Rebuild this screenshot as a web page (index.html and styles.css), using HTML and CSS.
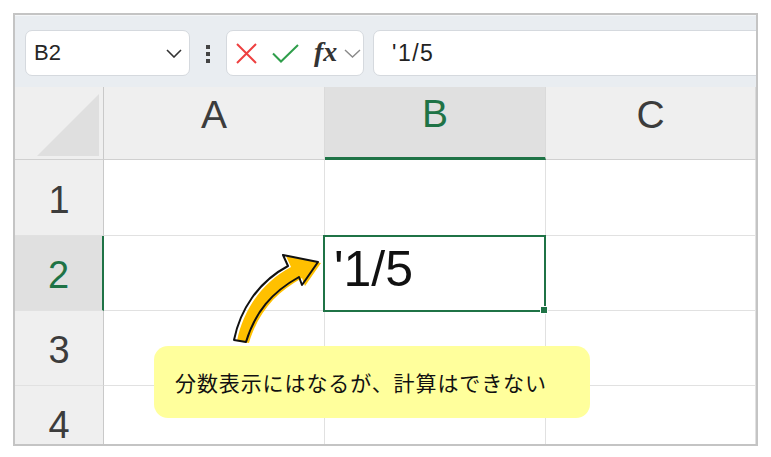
FILE: index.html
```html
<!DOCTYPE html>
<html lang="ja">
<head>
    <meta charset="UTF-8">
    <title>分数表示</title>
    <link rel="stylesheet" href="styles.css">
</head>
<body>
    <div class="frame">
        <div class="toolbar">
            <div class="name-box">
                <span>B2</span>
                <svg width="16" height="9" viewBox="0 0 16 9"><path d="M1 1 L8 8 L15 1" fill="none" stroke="#333" stroke-width="1.6"/></svg>
            </div>
            <div class="dots"><i></i><i></i><i></i></div>
            <div class="fx-box">
                <svg class="ico-x" width="21" height="21" viewBox="0 0 21 21"><path d="M1 1 L20 20 M20 1 L1 20" stroke="#ee4040" stroke-width="2" fill="none"/></svg>
                <svg class="ico-ok" width="27" height="19" viewBox="0 0 27 19"><path d="M1 9.5 L9 17.5 L26 1" stroke="#2f9e4b" stroke-width="2" fill="none"/></svg>
                <span class="fx">fx</span>
                <svg width="17" height="9" viewBox="0 0 17 9"><path d="M1 1 L8.5 8 L16 1" fill="none" stroke="#8a8a8a" stroke-width="1.4"/></svg>
            </div>
            <div class="formula">'1/5</div>
        </div>

        <div class="sheet">
            <div class="corner"><div class="tri"></div></div>
            <div class="col-head">A</div>
            <div class="col-head active">B</div>
            <div class="col-head">C</div>

            <div class="row-head">1</div>
            <div class="cell"></div>
            <div class="cell"></div>
            <div class="cell"></div>

            <div class="row-head active">2</div>
            <div class="cell"></div>
            <div class="cell selected">'1/5</div>
            <div class="cell"></div>

            <div class="row-head">3</div>
            <div class="cell"></div>
            <div class="cell"></div>
            <div class="cell"></div>

            <div class="row-head">4</div>
            <div class="cell"></div>
            <div class="cell"></div>
            <div class="cell"></div>
        </div>

        <!-- 吹き出しと矢印 -->
        <svg class="arrow" viewBox="15 15 741 429" width="741" height="429">
            <path transform="translate(3 1)" fill="#ffc000" d="M234 340 C240 310 258 282 288 266 L283 255 L318 262 L302 285 L299 277 C272 292 255 312 246 342 Z"/>
            <path fill="none" stroke="#111" stroke-width="2" stroke-linejoin="round" d="M234 340 C240 310 258 282 288 266 L283 255 L318 262 L302 285 L299 277 C272 292 255 312 246 342 Z"/>
        </svg>
        <div class="callout">分数表示にはなるが、計算はできない</div>
    </div>
</body>
</html>
```

FILE: styles.css
```css
* {
    margin: 0;
    padding: 0;
    box-sizing: border-box;
}
body {
    background: #fff;
    font-family: "Liberation Sans", Arial, sans-serif;
    color: #222;
}
.frame {
    position: relative;
    margin: 13px 0 0 13px;
    width: 745px;
    height: 433px;
    border: 2px solid #c4c4c4;
    overflow: hidden;
}
.toolbar {
    height: 72px;
    background: #e9edf1;
    border-top: 1px solid #f4f6f8;
    display: flex;
    align-items: flex-start;
    padding: 14px 0 0 10px;
    white-space: nowrap;
}
.toolbar > * {
    flex-shrink: 0;
}
.name-box,
.fx-box,
.formula {
    height: 46px;
    background: #fff;
    border: 1px solid #d5d9de;
    border-radius: 7px;
    display: flex;
    align-items: center;
}
.name-box {
    width: 165px;
    justify-content: space-between;
    padding: 0 7px 0 8px;
    font-size: 22px;
    color: #262626;
}
.dots {
    display: flex;
    flex-direction: column;
    gap: 3px;
    margin: 15px 16px 0 16px;
}
.dots i {
    display: block;
    width: 4px;
    height: 4px;
    background: #444;
}
.fx-box {
    width: 138px;
    padding-left: 9px;
}
.ico-ok {
    margin-left: 15px;
}
.fx {
    font-family: "Liberation Serif", "Times New Roman", serif;
    font-style: italic;
    font-weight: bold;
    font-size: 28px;
    color: #333;
    margin: -3px 7px 0 15px;
}
.formula {
    margin-left: 9px;
    width: 420px;
    padding-left: 18px;
    font-size: 23px;
    letter-spacing: 1.5px;
    color: #222;
}
.sheet {
    display: grid;
    grid-template-columns: 89px 221px 221px 1fr;
    grid-template-rows: 73px 76px 75px 75px 75px;
}
.sheet > div {
    border-right: 1px solid #e1e1e1;
    border-bottom: 1px solid #e1e1e1;
}
.corner {
    background: #efefef;
    display: flex;
    justify-content: flex-end;
    align-items: flex-end;
    padding: 0 4px 3px 0;
    border-right-color: #c9c9c9 !important;
    border-bottom-color: #d0d0d0 !important;
}
.tri {
    width: 62px;
    height: 62px;
    background: #dfdfdf;
    clip-path: polygon(100% 0, 100% 100%, 0 100%);
}
.col-head {
    background: #efefef;
    display: flex;
    justify-content: center;
    align-items: center;
    padding-bottom: 17px;
    font-size: 39px;
    color: #3c3c3c;
    border-right-color: #dadada !important;
    border-bottom-color: #d0d0d0 !important;
}
.col-head.active {
    background: #e0e0e0;
    color: #1f7346;
    border-bottom: 3px solid #1f7346 !important;
}
.row-head {
    background: #efefef;
    display: flex;
    justify-content: center;
    align-items: center;
    padding-top: 5px;
    font-size: 38px;
    color: #3c3c3c;
    border-right-color: #c9c9c9 !important;
}
.row-head.active {
    background: #e0e0e0;
    color: #1f7346;
    border-right: 2px solid #1f7346 !important;
}
.cell {
    background: #fff;
}
.selected {
    position: relative;
    font-size: 50px;
    color: #111;
    padding: 6px 0 0 9px;
    line-height: 1.1;
}
.selected::after {
    content: "";
    position: absolute;
    inset: -1px -1px -2px -2px;
    border: 2px solid #1f7346;
}
.selected::before {
    content: "";
    position: absolute;
    right: -3px;
    bottom: -4px;
    width: 6px;
    height: 6px;
    background: #1f7346;
    border: 1px solid #fff;
    z-index: 1;
}
.arrow {
    position: absolute;
    left: 0;
    top: 0;
}
.callout {
    position: absolute;
    left: 139px;
    top: 331px;
    width: 436px;
    height: 72px;
    background: #ffff9c;
    border-radius: 14px;
    display: flex;
    align-items: center;
    padding-left: 21px;
    font-family: "Noto Sans CJK JP", sans-serif;
    font-size: 21px;
    letter-spacing: 0.9px;
    color: #111;
}
```
